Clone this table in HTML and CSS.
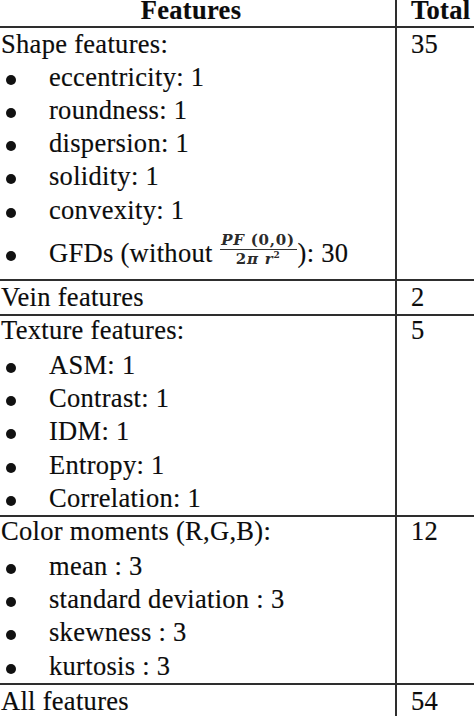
FILE: index.html
```html
<!DOCTYPE html>
<html>
<head>
<meta charset="utf-8">
<link rel="stylesheet" href="styles.css">
</head>
<body>
<table class="feat">
  <colgroup><col class="c1"><col class="c2"></colgroup>
  <thead>
    <tr><th class="name">Features</th><th class="num">Total</th></tr>
  </thead>
  <tbody>
    <tr class="row">
      <td class="name">
        <div class="head">Shape features:</div>
        <ul class="items">
          <li>eccentricity: 1</li>
          <li>roundness: 1</li>
          <li>dispersion: 1</li>
          <li>solidity: 1</li>
          <li>convexity: 1</li>
          <li class="tall">GFDs (without <span class="frac"><span class="numr"><i>PF</i> (0,0)</span><span class="denr">2<i>π</i> <i>r</i><sup>2</sup></span></span>): 30</li>
        </ul>
      </td>
      <td class="num"><div class="head">35</div></td>
    </tr>
    <tr class="row">
      <td class="name"><div class="head">Vein features</div></td>
      <td class="num"><div class="head">2</div></td>
    </tr>
    <tr class="row sub">
      <td class="name">
        <div class="head">Texture features:</div>
        <ul class="items">
          <li>ASM: 1</li>
          <li>Contrast: 1</li>
          <li>IDM: 1</li>
          <li>Entropy: 1</li>
          <li>Correlation: 1</li>
        </ul>
      </td>
      <td class="num"><div class="head">5</div></td>
    </tr>
    <tr class="row sub">
      <td class="name">
        <div class="head">Color moments (R,G,B):</div>
        <ul class="items">
          <li>mean : 3</li>
          <li>standard deviation : 3</li>
          <li>skewness : 3</li>
          <li>kurtosis : 3</li>
        </ul>
      </td>
      <td class="num"><div class="head">12</div></td>
    </tr>
    <tr class="row">
      <td class="name"><div class="head">All features</div></td>
      <td class="num"><div class="head">54</div></td>
    </tr>
  </tbody>
</table>
</body>
</html>
```
FILE: styles.css
```css
html, body {
  margin: 0;
  padding: 0;
  background: #ffffff;
  overflow: hidden;
}

body {
  font-family: "Liberation Serif", "Times New Roman", serif;
  font-size: 26.5px;
  letter-spacing: 0.3px;
  color: #0c0c0c;
  -webkit-text-stroke: 0.15px #0c0c0c;
}

.feat {
  border-collapse: separate;
  border-spacing: 0;
  table-layout: fixed;
  width: 501px;
  margin: -4px 0 0 -14px;
}

.c1 { width: 411px; }
.c2 { width: 90px; }

.feat th,
.feat td {
  padding: 0;
  vertical-align: top;
  text-align: left;
  border-bottom: 2px solid #2e2e2e;
  line-height: 33.2px;
}

.feat th {
  font-weight: bold;
  line-height: 29.5px;
}

.feat th.name {
  text-align: center;
}

.name {
  padding: 0 14px 0 15px !important;
  border-right: 2px solid #2e2e2e;
}

.num {
  padding: 0 0 0 14px !important;
}

.head {
  line-height: 33.2px;
}

.sub .head {
  margin-top: -2px;
}

.items {
  list-style: none;
  margin: 0;
  padding: 0;
}

.sub .items {
  margin-top: 1.8px;
}

.items li {
  line-height: 33.2px;
  white-space: nowrap;
}

.items li::before {
  content: "";
  display: inline-block;
  width: 10px;
  height: 10px;
  border-radius: 50%;
  background: #111111;
  margin: 0 33px 0 5px;
  vertical-align: 1px;
}

.items li.tall {
  line-height: 52px;
}

.frac {
  display: inline-flex;
  flex-direction: column;
  align-items: center;
  vertical-align: 17px;
  min-width: 77px;
  margin: 0 1px 0 0;
  font-family: "DejaVu Serif", serif;
  font-weight: bold;
  font-size: 15px;
  line-height: 16px;
  letter-spacing: 0.8px;
  color: #2b2b2b;
  -webkit-text-stroke: 0;
}

.numr {
  display: block;
  width: 100%;
  text-align: center;
  border-bottom: 1px solid #333333;
  padding-bottom: 1px;
}

.denr {
  display: block;
  text-align: center;
  padding-top: 1px;
}

.frac i {
  font-style: italic;
}

.frac sup {
  font-size: 9px;
  line-height: 0;
  vertical-align: 6px;
}
```
